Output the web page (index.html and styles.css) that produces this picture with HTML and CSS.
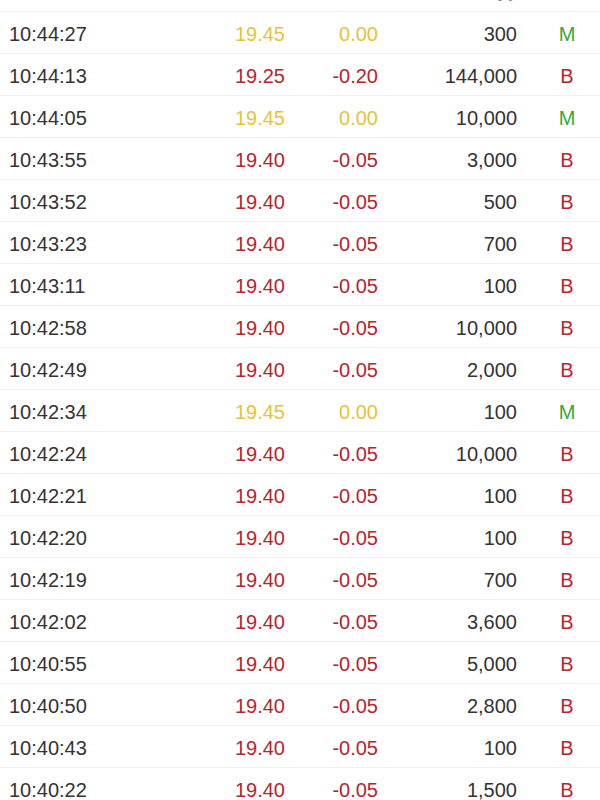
FILE: index.html
```html
<!DOCTYPE html>
<html>
<head>
<meta charset="utf-8">
<link rel="stylesheet" href="styles.css">
</head>
<body>
<div class="table">
  <div class="row head">
    <span class="c-time">Time</span><span class="c-price">Price</span><span class="c-chg">+/-</span><span class="c-vol">Qty</span><span class="c-flag">BS</span>
  </div>
  <div class="row"><span class="c-time">10:44:27</span><span class="c-price flat">19.45</span><span class="c-chg flat">0.00</span><span class="c-vol">300</span><span class="c-flag m">M</span></div>
  <div class="row"><span class="c-time">10:44:13</span><span class="c-price down">19.25</span><span class="c-chg down">-0.20</span><span class="c-vol">144,000</span><span class="c-flag b">B</span></div>
  <div class="row"><span class="c-time">10:44:05</span><span class="c-price flat">19.45</span><span class="c-chg flat">0.00</span><span class="c-vol">10,000</span><span class="c-flag m">M</span></div>
  <div class="row"><span class="c-time">10:43:55</span><span class="c-price down">19.40</span><span class="c-chg down">-0.05</span><span class="c-vol">3,000</span><span class="c-flag b">B</span></div>
  <div class="row"><span class="c-time">10:43:52</span><span class="c-price down">19.40</span><span class="c-chg down">-0.05</span><span class="c-vol">500</span><span class="c-flag b">B</span></div>
  <div class="row"><span class="c-time">10:43:23</span><span class="c-price down">19.40</span><span class="c-chg down">-0.05</span><span class="c-vol">700</span><span class="c-flag b">B</span></div>
  <div class="row"><span class="c-time">10:43:11</span><span class="c-price down">19.40</span><span class="c-chg down">-0.05</span><span class="c-vol">100</span><span class="c-flag b">B</span></div>
  <div class="row"><span class="c-time">10:42:58</span><span class="c-price down">19.40</span><span class="c-chg down">-0.05</span><span class="c-vol">10,000</span><span class="c-flag b">B</span></div>
  <div class="row"><span class="c-time">10:42:49</span><span class="c-price down">19.40</span><span class="c-chg down">-0.05</span><span class="c-vol">2,000</span><span class="c-flag b">B</span></div>
  <div class="row"><span class="c-time">10:42:34</span><span class="c-price flat">19.45</span><span class="c-chg flat">0.00</span><span class="c-vol">100</span><span class="c-flag m">M</span></div>
  <div class="row"><span class="c-time">10:42:24</span><span class="c-price down">19.40</span><span class="c-chg down">-0.05</span><span class="c-vol">10,000</span><span class="c-flag b">B</span></div>
  <div class="row"><span class="c-time">10:42:21</span><span class="c-price down">19.40</span><span class="c-chg down">-0.05</span><span class="c-vol">100</span><span class="c-flag b">B</span></div>
  <div class="row"><span class="c-time">10:42:20</span><span class="c-price down">19.40</span><span class="c-chg down">-0.05</span><span class="c-vol">100</span><span class="c-flag b">B</span></div>
  <div class="row"><span class="c-time">10:42:19</span><span class="c-price down">19.40</span><span class="c-chg down">-0.05</span><span class="c-vol">700</span><span class="c-flag b">B</span></div>
  <div class="row"><span class="c-time">10:42:02</span><span class="c-price down">19.40</span><span class="c-chg down">-0.05</span><span class="c-vol">3,600</span><span class="c-flag b">B</span></div>
  <div class="row"><span class="c-time">10:40:55</span><span class="c-price down">19.40</span><span class="c-chg down">-0.05</span><span class="c-vol">5,000</span><span class="c-flag b">B</span></div>
  <div class="row"><span class="c-time">10:40:50</span><span class="c-price down">19.40</span><span class="c-chg down">-0.05</span><span class="c-vol">2,800</span><span class="c-flag b">B</span></div>
  <div class="row"><span class="c-time">10:40:43</span><span class="c-price down">19.40</span><span class="c-chg down">-0.05</span><span class="c-vol">100</span><span class="c-flag b">B</span></div>
  <div class="row"><span class="c-time">10:40:22</span><span class="c-price down">19.40</span><span class="c-chg down">-0.05</span><span class="c-vol">1,500</span><span class="c-flag b">B</span></div>
</div>
</body>
</html>
```

FILE: styles.css
```css
html, body {
  margin: 0;
  padding: 0;
  background: #ffffff;
  overflow: hidden;
}
.table {
  width: 600px;
  margin-top: -30px;
  font-family: "Liberation Sans", Arial, sans-serif;
  font-size: 20px;
  color: #333333;
}
.row {
  display: grid;
  grid-template-columns: 191px 85px 93px 139px 1fr;
  align-items: center;
  height: 39px;
  padding-top: 2px;
  padding-left: 9px;
  border-bottom: 1px solid #efefef;
  line-height: 24px;
}
.row.head {
  align-items: end;
  padding-top: 0;
  padding-bottom: 6px;
  height: 35px;
  font-size: 17px;
  color: #888888;
}
.c-price, .c-chg, .c-vol {
  text-align: right;
}
.c-flag {
  text-align: center;
  padding-left: 17px;
}
.flat { color: #e5c33a; }
.down { color: #b3262d; }
.m { color: #34a83a; }
.b { color: #b3262d; }
```
